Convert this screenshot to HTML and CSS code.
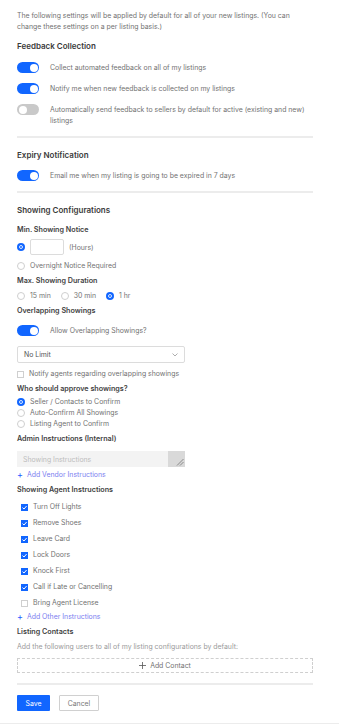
FILE: index.html
```html
<!DOCTYPE html>
<html>
<head>
    <title>Listing Settings</title>
    <meta name="viewport" content="width=device-width, initial-scale=1.0">
    <link rel="stylesheet" href="styles.css">
</head>
<body>
    <div class="page">
        <p class="intro">The following settings will be applied by default for all of your new listings. (You can change these settings on a per listing basis.)</p>

        <!-- Feedback -->
        <h2 class="section-title">Feedback Collection</h2>
        <div class="toggle-list">
            <div class="toggle-row">
                <span class="toggle on"><span class="knob"></span></span>
                <span class="toggle-text">Collect automated feedback on all of my listings</span>
            </div>
            <div class="toggle-row">
                <span class="toggle on"><span class="knob"></span></span>
                <span class="toggle-text">Notify me when new feedback is collected on my listings</span>
            </div>
            <div class="toggle-row">
                <span class="toggle"><span class="knob"></span></span>
                <span class="toggle-text">Automatically send feedback to sellers by default for active (existing and new) listings</span>
            </div>
        </div>
        <hr class="divider">

        <!-- Expiry -->
        <h2 class="section-title">Expiry Notification</h2>
        <div class="toggle-list">
            <div class="toggle-row">
                <span class="toggle on"><span class="knob"></span></span>
                <span class="toggle-text">Email me when my listing is going to be expired in 7 days</span>
            </div>
        </div>
        <hr class="divider">

        <!-- Showing -->
        <h2 class="section-title">Showing Configurations</h2>

        <div class="label label-first">Min. Showing Notice</div>
        <div class="notice-row">
            <span class="radio checked"></span>
            <span class="hours-input"></span>
            <span>(Hours)</span>
        </div>
        <div class="radio-row overnight">
            <span class="radio"></span>
            <span>Overnight Notice Required</span>
        </div>

        <div class="label">Max. Showing Duration</div>
        <div class="duration-row">
            <div class="radio-row"><span class="radio"></span><span>15 min</span></div>
            <div class="radio-row"><span class="radio"></span><span>30 min</span></div>
            <div class="radio-row"><span class="radio checked"></span><span>1 hr</span></div>
        </div>

        <div class="label">Overlapping Showings</div>
        <div class="toggle-row overlap">
            <span class="toggle on"><span class="knob"></span></span>
            <span class="toggle-text">Allow Overlapping Showings?</span>
        </div>
        <div class="select">
            <span>No Limit</span>
            <svg class="chevron" width="6" height="4" viewBox="0 0 6 4"><polyline points="0.5,0.5 3,3 5.5,0.5" fill="none" stroke="#999" stroke-width="0.8"/></svg>
        </div>
        <div class="check-row notify">
            <span class="checkbox"></span>
            <span>Notify agents regarding overlapping showings</span>
        </div>

        <div class="label">Who should approve showings?</div>
        <div class="approve-list">
            <div class="radio-row"><span class="radio checked"></span><span>Seller / Contacts to Confirm</span></div>
            <div class="radio-row"><span class="radio"></span><span>Auto-Confirm All Showings</span></div>
            <div class="radio-row"><span class="radio"></span><span>Listing Agent to Confirm</span></div>
        </div>

        <div class="label">Admin Instructions (Internal)</div>
        <div class="textarea">
            <span class="placeholder">Showing Instructions</span>
            <span class="resize">
                <svg width="8" height="8" viewBox="0 0 8 8"><line x1="1" y1="7.5" x2="7.5" y2="1" stroke="#555" stroke-width="0.6"/><line x1="4" y1="7.5" x2="7.5" y2="4" stroke="#555" stroke-width="0.6"/></svg>
            </span>
        </div>
        <div class="add-link"><span class="plus">+</span>Add Vendor Instructions</div>

        <div class="label">Showing Agent Instructions</div>
        <div class="agent-list">
            <div class="check-row"><span class="checkbox checked"><svg width="7" height="7" viewBox="0 0 7 7"><polyline points="1.5,3.6 3,5 5.6,2" fill="none" stroke="#fff" stroke-width="1"/></svg></span><span>Turn Off Lights</span></div>
            <div class="check-row"><span class="checkbox checked"><svg width="7" height="7" viewBox="0 0 7 7"><polyline points="1.5,3.6 3,5 5.6,2" fill="none" stroke="#fff" stroke-width="1"/></svg></span><span>Remove Shoes</span></div>
            <div class="check-row"><span class="checkbox checked"><svg width="7" height="7" viewBox="0 0 7 7"><polyline points="1.5,3.6 3,5 5.6,2" fill="none" stroke="#fff" stroke-width="1"/></svg></span><span>Leave Card</span></div>
            <div class="check-row"><span class="checkbox checked"><svg width="7" height="7" viewBox="0 0 7 7"><polyline points="1.5,3.6 3,5 5.6,2" fill="none" stroke="#fff" stroke-width="1"/></svg></span><span>Lock Doors</span></div>
            <div class="check-row"><span class="checkbox checked"><svg width="7" height="7" viewBox="0 0 7 7"><polyline points="1.5,3.6 3,5 5.6,2" fill="none" stroke="#fff" stroke-width="1"/></svg></span><span>Knock First</span></div>
            <div class="check-row"><span class="checkbox checked"><svg width="7" height="7" viewBox="0 0 7 7"><polyline points="1.5,3.6 3,5 5.6,2" fill="none" stroke="#fff" stroke-width="1"/></svg></span><span>Call if Late or Cancelling</span></div>
            <div class="check-row"><span class="checkbox"></span><span>Bring Agent License</span></div>
        </div>
        <div class="add-link other"><span class="plus">+</span>Add Other Instructions</div>

        <div class="label">Listing Contacts</div>
        <div class="contacts-note">Add the following users to all of my listing configurations by default:</div>
        <div class="add-contact">
            <svg width="7" height="7" viewBox="0 0 7 7"><line x1="3.5" y1="0" x2="3.5" y2="7" stroke="#555" stroke-width="0.8"/><line x1="0" y1="3.5" x2="7" y2="3.5" stroke="#555" stroke-width="0.8"/></svg>
            <span>Add Contact</span>
        </div>
        <hr class="divider">

        <div class="actions">
            <button class="btn btn-save">Save</button>
            <button class="btn btn-cancel">Cancel</button>
        </div>
    </div>
</body>
</html>
```

FILE: styles.css
```css
* {
    margin: 0;
    padding: 0;
    box-sizing: border-box;
    font-family: 'Inter', 'Liberation Sans', sans-serif;
}

body {
    background: white;
    color: #727272;
    font-size: 6.9px;
}

.page {
    padding: 10px 26px 12px 17px;
    border-bottom: 1px solid #ececec;
}

.intro {
    line-height: 11px;
}

.section-title {
    font-size: 8px;
    font-weight: 600;
    color: #3a3a3a;
    line-height: 12px;
    margin-top: 8px;
}

.divider + .section-title {
    margin-top: 11px;
}

.toggle-list {
    display: flex;
    flex-direction: column;
    gap: 10px;
    margin-top: 10px;
}

.divider + .section-title + .toggle-list {
    margin-top: 9px;
}

.toggle-row {
    display: flex;
    align-items: flex-start;
    gap: 11px;
}

.toggle {
    flex: 0 0 22px;
    height: 11px;
    border-radius: 6px;
    background: #c9c9c9;
    display: flex;
    align-items: center;
    padding: 0 1.5px;
}

.toggle.on {
    background: #1166ff;
    justify-content: flex-end;
}

.knob {
    width: 8px;
    height: 8px;
    border-radius: 50%;
    background: white;
}

.toggle-text {
    line-height: 11px;
}

.divider {
    border: none;
    height: 2px;
    background: #ececec;
    margin-top: 9px;
}

.toggle-list + .divider {
    margin-top: 10px;
}

.label {
    font-size: 7.2px;
    font-weight: 600;
    color: #3f3f3f;
    line-height: 10px;
    margin-top: 5px;
}

.label-first {
    margin-top: 9px;
}

.radio {
    flex: 0 0 8px;
    width: 8px;
    height: 8px;
    border-radius: 50%;
    border: 1px solid #cfcfcf;
    background: white;
}

.radio.checked {
    border: 2px solid #1166ff;
    background: #1166ff;
    box-shadow: inset 0 0 0 1px white;
}

.radio-row {
    display: flex;
    align-items: center;
    gap: 5px;
    line-height: 10px;
}

.notice-row {
    display: flex;
    align-items: center;
    gap: 5px;
    margin-top: 4px;
}

.hours-input {
    width: 34px;
    height: 16px;
    border: 1px solid #dcdcdc;
    border-radius: 2px;
}

.overnight {
    margin-top: 6px;
}

.duration-row {
    display: flex;
    gap: 10px;
    margin-top: 5px;
}

.overlap {
    margin-top: 9px;
}

.select {
    width: 168px;
    height: 17px;
    border: 1px solid #dcdcdc;
    border-radius: 2px;
    display: flex;
    align-items: center;
    justify-content: space-between;
    padding: 0 6px;
    margin-top: 10px;
    color: #555;
}

.check-row {
    display: flex;
    align-items: center;
    gap: 5px;
    line-height: 10px;
}

.checkbox {
    flex: 0 0 7px;
    width: 7px;
    height: 7px;
    border: 1px solid #cfcfcf;
    background: white;
    display: flex;
}

.checkbox.checked {
    border: none;
    background: #1166ff;
}

.notify {
    margin-top: 6px;
}

.approve-list {
    display: flex;
    flex-direction: column;
    gap: 1px;
    margin-top: 3px;
}

.textarea {
    width: 168px;
    height: 16px;
    background: #f3f3f3;
    display: flex;
    align-items: center;
    justify-content: space-between;
    margin-top: 7px;
}

.placeholder {
    padding-left: 6px;
    color: #bdbdbd;
}

.resize {
    width: 17px;
    height: 16px;
    background: #d9d9d9;
    display: flex;
    align-items: flex-end;
    justify-content: flex-end;
    padding: 0 1px 1px 0;
}

.add-link {
    color: #7b7ef0;
    line-height: 10px;
    margin-top: 3px;
    display: flex;
    gap: 4px;
}

.plus {
    color: #1d5cff;
    font-size: 9px;
}

.agent-list {
    display: flex;
    flex-direction: column;
    gap: 6px;
    margin-top: 7px;
    padding-left: 4px;
}

.add-link.other {
    margin-top: 4px;
}

.contacts-note {
    margin-top: 5px;
    line-height: 10px;
    color: #9a9a9a;
}

.add-contact {
    height: 15px;
    border: 1px dashed #cfcfcf;
    display: flex;
    align-items: center;
    justify-content: center;
    gap: 4px;
    margin-top: 6px;
}

.add-contact + .divider {
    margin-top: 10px;
}

.actions {
    display: flex;
    gap: 9px;
    margin-top: 10px;
}

.btn {
    height: 16px;
    font-size: 6.9px;
    border-radius: 1px;
    cursor: pointer;
}

.btn-save {
    width: 33px;
    background: #1166ff;
    color: white;
    border: none;
}

.btn-cancel {
    width: 40px;
    background: white;
    color: #777;
    border: 1px solid #d0d0d0;
}
```
